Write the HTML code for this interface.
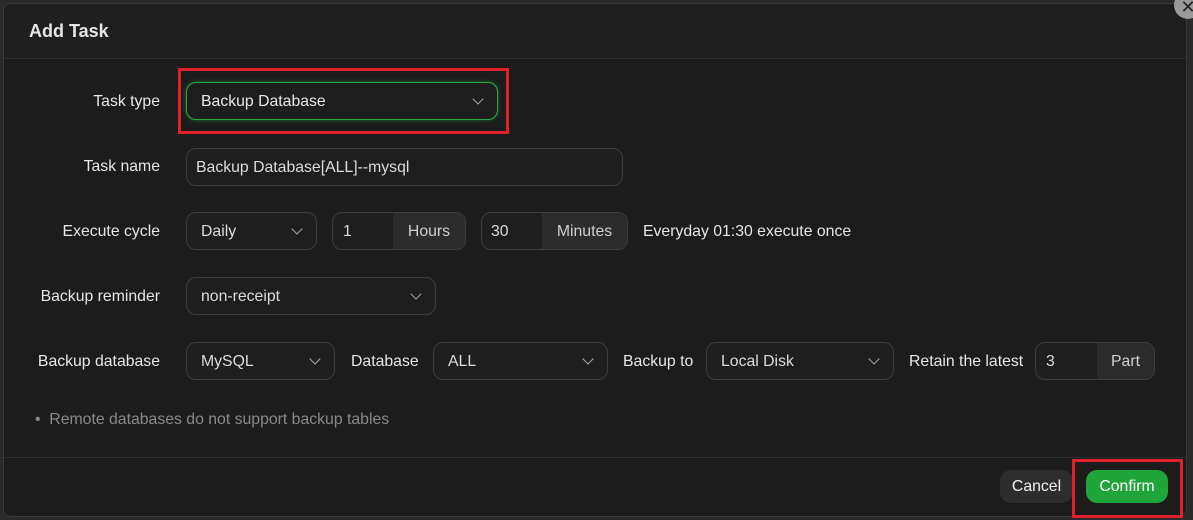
<!DOCTYPE html><html><head><style>
body{margin:0;width:1193px;height:520px;background:#2a2a2a;overflow:hidden;font-family:"Liberation Sans",sans-serif;position:relative}
.dlg{position:absolute;left:3px;top:3px;width:1182px;height:512px;background:#1c1c1c;border:1px solid #3a3a3a;border-radius:8px;overflow:hidden}
.a{position:absolute}
.lbl{position:absolute;color:#e6e6e6;font-size:15.8px;text-align:right}
.in{position:absolute;height:38px;border:1px solid #3d3d3d;border-radius:10px;background:#1e1e1e;box-sizing:border-box;color:#dcdcdc;font-size:15.8px;line-height:37px;padding-left:14px;overflow:hidden}
.ad{position:absolute;top:0;bottom:0;right:0;background:#2c2c2c;color:#cfcfcf;text-align:center}
.ch{position:absolute;right:15px;top:12px;width:7px;height:7px;border-right:1.3px solid #aaa;border-bottom:1.3px solid #aaa;transform:rotate(45deg)}
</style></head><body>
<div class="dlg">
<div class="a" style="left:0;top:0;right:0;height:54px;border-bottom:1px solid #2e2e2e;background:#1f1f1f"></div>
<div class="a" style="left:25px;top:17px;color:#e6e6e6;font-size:18px;font-weight:bold">Add Task</div>
<div class="a" style="left:0;right:0;top:453px;border-top:1px solid #2e2e2e"></div>
</div>
<div class="a" style="left:1174px;top:-9px;width:28px;height:28px;border-radius:50%;background:#9a9a9a;color:#222;font-size:18px;text-align:center;line-height:32px">✕</div>

<div class="lbl" style="right:1033px;top:93px">Task type</div>
<div class="in" style="left:186px;top:82px;width:312px;border-color:#2fa84a;color:#e8e8e8;box-shadow:0 0 4px #1d6b2e">Backup Database<span class="ch"></span></div>
<div class="a" style="left:178px;top:68px;width:325px;height:60px;border:3px solid #e0202a"></div>

<div class="lbl" style="right:1033px;top:158px">Task name</div>
<div class="in" style="left:186px;top:148px;width:437px;padding-left:9px">Backup Database[ALL]--mysql</div>

<div class="lbl" style="right:1033px;top:223px">Execute cycle</div>
<div class="in" style="left:186px;top:212px;width:131px">Daily<span class="ch"></span></div>
<div class="in" style="left:332px;top:212px;width:134px;padding-left:10px">1<div class="ad" style="width:72px">Hours</div></div>
<div class="in" style="left:481px;top:212px;width:147px;padding-left:9px">30<div class="ad" style="width:85px">Minutes</div></div>
<div class="a" style="left:643px;top:223px;color:#e6e6e6;font-size:15.8px">Everyday 01:30 execute once</div>

<div class="lbl" style="right:1033px;top:288px">Backup reminder</div>
<div class="in" style="left:186px;top:277px;width:250px">non-receipt<span class="ch"></span></div>

<div class="lbl" style="right:1033px;top:353px">Backup database</div>
<div class="in" style="left:186px;top:342px;width:149px">MySQL<span class="ch"></span></div>
<div class="a" style="left:351px;top:353px;color:#e6e6e6;font-size:15.8px">Database</div>
<div class="in" style="left:433px;top:342px;width:175px">ALL<span class="ch"></span></div>
<div class="a" style="left:623px;top:353px;color:#e6e6e6;font-size:15.8px">Backup to</div>
<div class="in" style="left:706px;top:342px;width:188px">Local Disk<span class="ch"></span></div>
<div class="a" style="left:909px;top:353px;color:#e6e6e6;font-size:15.8px">Retain the latest</div>
<div class="in" style="left:1035px;top:342px;width:120px;padding-left:10px">3<div class="ad" style="width:57px">Part</div></div>

<div class="a" style="left:35px;top:411px;color:#8a8a8a;font-size:15.8px">•&nbsp;&nbsp;Remote databases do not support backup tables</div>

<div class="a" style="left:1000px;top:470px;width:73px;height:33px;border-radius:11px;background:#2d2d2d;color:#f0f0f0;font-size:15.8px;text-align:center;line-height:34px">Cancel</div>
<div class="a" style="left:1086px;top:470px;width:82px;height:33px;border-radius:11px;background:#20a53a;color:#fff;font-size:15.8px;text-align:center;line-height:34px">Confirm</div>
<div class="a" style="left:1072px;top:459px;width:105px;height:53px;border:3px solid #e0202a"></div>
</body></html>
